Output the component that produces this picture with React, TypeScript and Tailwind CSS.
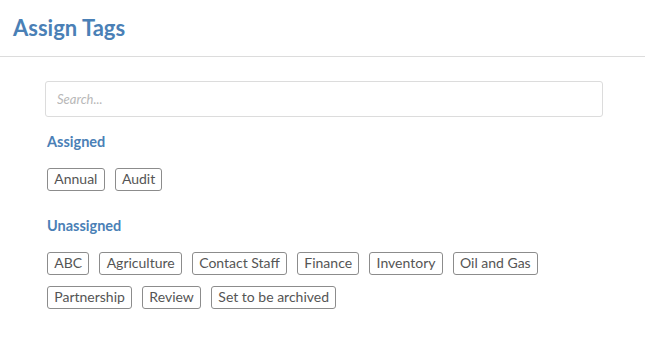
import React from "react"

const assigned = ["Annual", "Audit"]
const unassigned = [
  "ABC",
  "Agriculture",
  "Contact Staff",
  "Finance",
  "Inventory",
  "Oil and Gas",
  "Partnership",
  "Review",
  "Set to be archived",
]

function Tag({ label }: { label: string }) {
  return (
    <span className="inline-flex h-[23px] items-center rounded-[3px] border border-[#8c8c8c] px-[6.25px] text-[14px] leading-none text-[#555]">
      {label}
    </span>
  )
}

export default function App() {
  return (
    <div className="min-h-screen bg-white font-['Lato',sans-serif]">
      {/* Header */}
      <div className="flex h-[57px] items-center border-b border-[#dcdcdc] px-[13px] pb-[2px]">
        <h1 className="text-[22px] font-bold text-[#4a80b6]">Assign Tags</h1>
      </div>

      <div className="px-[45px] pt-[24px]">
        <input
          type="text"
          placeholder="Search..."
          className="block h-[36px] w-[558px] rounded-[3px] border border-[#dcdcdc] px-[11px] text-[13px] italic text-[#555] placeholder:text-[#b8b8b8] outline-none"
        />

        <h2 className="mt-[14px] ml-[2px] text-[14.5px] font-bold text-[#4a80b6]">Assigned</h2>
        <div className="mt-[15px] ml-[2px] flex flex-wrap gap-x-[10px] gap-y-[11px]">
          {assigned.map((t) => (
            <Tag key={t} label={t} />
          ))}
        </div>

        <h2 className="mt-[24px] ml-[2px] text-[14.5px] font-bold text-[#4a80b6]">Unassigned</h2>
        <div className="mt-[15px] ml-[2px] flex w-[520px] flex-wrap gap-x-[10px] gap-y-[11px]">
          {unassigned.map((t) => (
            <Tag key={t} label={t} />
          ))}
        </div>
      </div>
    </div>
  )
}
